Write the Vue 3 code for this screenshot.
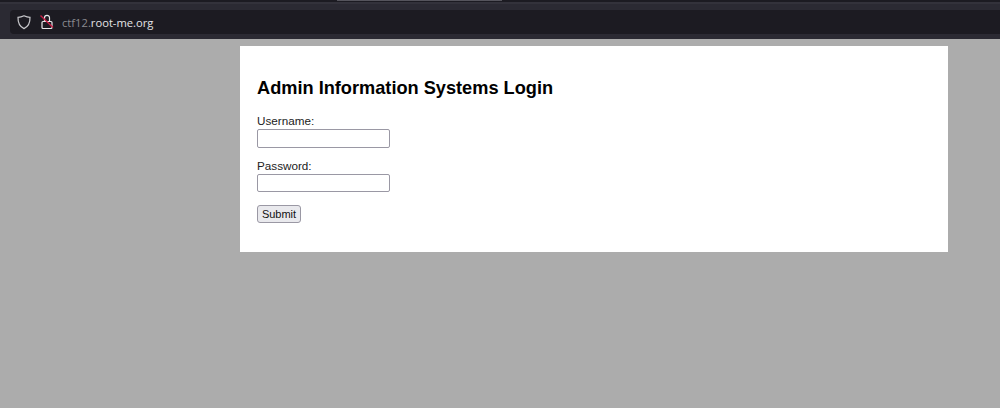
<script setup>
</script>

<template>
  <div class="page">
    <div class="tabstrip"><div class="tab"></div></div>
    <div class="toolbar">
      <div class="urlbar">
        <svg class="shield" width="16" height="16" viewBox="0 0 16 16" fill="none" stroke="#c8c8cc" stroke-width="1.2">
          <path d="M8 1.8 C10 2.8 12 3.3 14 3.3 C14.2 8.8 12.4 12.6 8 14.6 C3.6 12.6 1.8 8.8 2 3.3 C4 3.3 6 2.8 8 1.8 Z" />
        </svg>
        <svg class="lock" width="16" height="18" viewBox="0 0 16 18" fill="none">
          <path d="M5.5 8V4.8a2.5 2.5 0 0 1 5 0v3.2" stroke="#e8e8ea" stroke-width="1.2" />
          <rect x="3" y="8.5" width="10" height="7" rx="1" stroke="#e8e8ea" stroke-width="1.2" />
          <path d="M1.5 2.5 L14 14.5" stroke="#c81e45" stroke-width="1.4" />
        </svg>
        <span class="url"><span class="sub">ctf12.</span>root-me.org</span>
      </div>
    </div>
    <div class="content">
      <main class="card">
        <h2>Admin Information Systems Login</h2>
        <form @submit.prevent>
          <div class="field">
            <label for="u">Username:</label>
            <input id="u" type="text" />
          </div>
          <div class="field">
            <label for="p">Password:</label>
            <input id="p" type="password" />
          </div>
          <button type="submit">Submit</button>
        </form>
      </main>
    </div>
  </div>
</template>

<style>
html, body { margin: 0; background: #acacac; }
</style>

<style scoped>
.page {
  width: 1000px;
  height: 408px;
  overflow: hidden;
  background: #acacac;
  display: flex;
  flex-direction: column;
}
.tabstrip {
  height: 2px;
  background: #1c1b22;
  padding-left: 337px;
  flex: none;
}
.tab { width: 165px; height: 1px; background: #55545c; }
.toolbar {
  height: 37px;
  flex: none;
  box-sizing: border-box;
  background: #2b2a33;
  padding: 6px 0 5px 10px;
  border-top: 2px solid #33323b;
}
.urlbar {
  height: 24px;
  background: #1c1b22;
  border-radius: 4px 0 0 4px;
  display: flex;
  align-items: center;
  padding-left: 6px;
}
.shield { margin-right: 7px; }
.lock { margin-right: 7px; }
.url {
  font: 11.2px "Open Sans", sans-serif;
  color: #e4e4e6;
}
.sub { color: #8a8a90; }
.content {
  flex: 1;
  padding: 7px 52px 0 240px;
}
.card {
  background: #fff;
  height: 205.5px;
  box-sizing: border-box;
  padding: 31px 17px 0;
  color: #000;
}
h2 {
  margin: 0 0 16px;
  font: bold 18.2px/22px "Liberation Sans", Arial, sans-serif;
}
.field { margin-bottom: 12px; }
label {
  display: block;
  height: 14px;
  font: 11.7px/12px "Liberation Sans", Arial, sans-serif;
  color: #222;
}
input {
  display: block;
  width: 133px;
  height: 18.5px;
  box-sizing: border-box;
  border: 1px solid #9a98a4;
  border-radius: 2px;
  padding: 1px 2px;
  background: #fff;
}
button {
  display: block;
  margin-top: 12.5px;
  width: 44px;
  height: 18px;
  box-sizing: border-box;
  padding: 0;
  border: 1px solid #9a98a4;
  border-radius: 3px;
  background: #e9e9ed;
  font: 11px "Liberation Sans", Arial, sans-serif;
  color: #111;
}
</style>
